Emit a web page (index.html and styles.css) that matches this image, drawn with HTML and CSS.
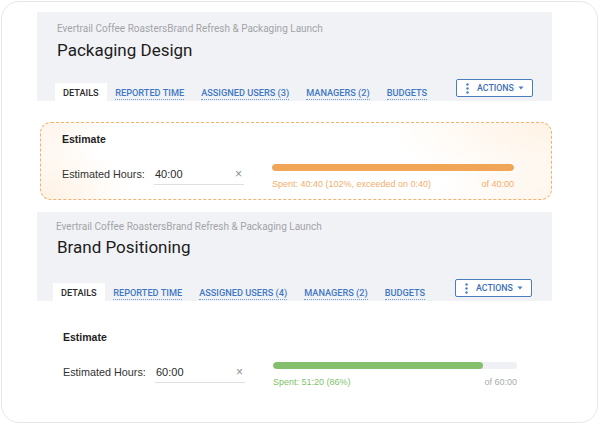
FILE: index.html
```html
<!DOCTYPE html>
<html lang="en">
<head>
<meta charset="utf-8">
<title>Tasks</title>
<link rel="stylesheet" href="styles.css">
</head>
<body>
<div class="card">

  <section class="panel">
    <div class="crumb">Evertrail Coffee RoastersBrand Refresh &amp; Packaging Launch</div>
    <h1 class="title">Packaging Design</h1>
    <div class="tabs">
      <span class="tab active">DETAILS</span>
      <span class="tab"><span class="tab-link">REPORTED TIME</span></span>
      <span class="tab"><span class="tab-link">ASSIGNED USERS (3)</span></span>
      <span class="tab"><span class="tab-link">MANAGERS (2)</span></span>
      <span class="tab"><span class="tab-link">BUDGETS</span></span>
      <button class="actions" type="button">
        <svg class="dots" width="3" height="11" viewBox="0 0 3 11"><circle cx="1.5" cy="1.5" r="1.2"/><circle cx="1.5" cy="5.5" r="1.2"/><circle cx="1.5" cy="9.5" r="1.2"/></svg>
        <span>ACTIONS</span>
        <svg class="caret" width="6" height="4" viewBox="0 0 6 4"><path d="M0.5 0.5h5L3 3.5z"/></svg>
      </button>
    </div>
  </section>

  <section class="estimate over">
    <div class="est-head">Estimate</div>
    <div class="est-row">
      <label class="est-label">Estimated Hours:</label>
      <div class="est-input"><span>40:00</span><span class="clear">×</span></div>
      <div class="est-progress">
        <div class="track"><div class="fill" style="width:100%"></div></div>
        <div class="est-meta"><span>Spent: 40:40 (102%, exceeded on 0:40)</span><span>of 40:00</span></div>
      </div>
    </div>
  </section>

  <section class="panel second">
    <div class="crumb">Evertrail Coffee RoastersBrand Refresh &amp; Packaging Launch</div>
    <h1 class="title">Brand Positioning</h1>
    <div class="tabs">
      <span class="tab active">DETAILS</span>
      <span class="tab"><span class="tab-link">REPORTED TIME</span></span>
      <span class="tab"><span class="tab-link">ASSIGNED USERS (4)</span></span>
      <span class="tab"><span class="tab-link">MANAGERS (2)</span></span>
      <span class="tab"><span class="tab-link">BUDGETS</span></span>
      <button class="actions" type="button">
        <svg class="dots" width="3" height="11" viewBox="0 0 3 11"><circle cx="1.5" cy="1.5" r="1.2"/><circle cx="1.5" cy="5.5" r="1.2"/><circle cx="1.5" cy="9.5" r="1.2"/></svg>
        <span>ACTIONS</span>
        <svg class="caret" width="6" height="4" viewBox="0 0 6 4"><path d="M0.5 0.5h5L3 3.5z"/></svg>
      </button>
    </div>
  </section>

  <section class="estimate ok">
    <div class="est-head">Estimate</div>
    <div class="est-row">
      <label class="est-label">Estimated Hours:</label>
      <div class="est-input"><span>60:00</span><span class="clear">×</span></div>
      <div class="est-progress">
        <div class="track"><div class="fill" style="width:86%"></div></div>
        <div class="est-meta"><span>Spent: 51:20 (86%)</span><span class="of">of 60:00</span></div>
      </div>
    </div>
  </section>

</div>
</body>
</html>
```

FILE: styles.css
```css
* { box-sizing: border-box; }

html, body {
  margin: 0;
  background: #ffffff;
}

body {
  font-family: Roboto, "Liberation Sans", Arial, sans-serif;
  color: #222;
}

.card {
  margin: 1px 0 0 1px;
  width: 597px;
  height: 422px;
  border: 1px solid #e5e7eb;
  border-radius: 18px;
  padding: 10px 0 0 35px;
  background: #fff;
  overflow: hidden;
}

/* task header */
.panel {
  width: 515px;
  height: 89px;
  background: #f1f2f5;
  padding: 10px 19px 0 18px;
  display: flex;
  flex-direction: column;
}

.panel.second {
  padding-top: 8px;
  padding-left: 16px;
  padding-right: 20px;
}

.crumb {
  font-size: 10px;
  line-height: 13px;
  color: #a2a4a8;
  margin-left: 2px;
  white-space: nowrap;
}

.second .crumb { margin-left: 3px; }

.title {
  margin: 5px 0 0 2px;
  font-size: 17px;
  line-height: 20px;
  font-weight: 400;
  color: #1c1c1c;
}

.second .title { margin-top: 4px; margin-left: 4px; }

.tabs {
  margin-top: auto;
  display: flex;
  align-items: flex-end;
}

.tab {
  height: 18px;
  padding: 0 8.5px;
  font-size: 9.2px;
  font-weight: 500;
  line-height: 19px;
  color: #3f78c4;
  white-space: nowrap;
}

.tab.active {
  background: #fff;
  color: #2b2b2b;
  padding: 0 8px;
}

.tab-link {
  border-bottom: 1px dotted #6f9bd8;
  padding-bottom: 1px;
}

.actions {
  margin: 0 0 4px auto;
  width: 77px;
  height: 18px;
  border: 1px solid #4a7cc2;
  border-radius: 2px;
  background: #fff;
  color: #3d6fb6;
  font-family: inherit;
  font-size: 8.8px;
  font-weight: 500;
  display: flex;
  align-items: center;
  padding: 0 0 0 9px;
  cursor: pointer;
}

.actions .dots { fill: #4a7cc2; margin-right: 8px; }
.actions .caret { fill: #4a7cc2; margin-left: auto; margin-right: 8px; }

/* estimate block */
.estimate {
  width: 512px;
  height: 78px;
  margin: 21px 0 12px 3px;
  border: 1px dashed transparent;
  border-radius: 11px;
  padding: 9px 37px 0 21px;
  font-family: "Liberation Sans", Arial, sans-serif;
}

.estimate.over {
  border-color: #f0b26e;
  background:
    radial-gradient(ellipse 90px 60px at 0% 100%, #fff1e2 0%, rgba(255,241,226,0) 100%),
    radial-gradient(ellipse 160px 70px at 100% 0%, #fff2e4 0%, rgba(255,242,228,0) 100%),
    radial-gradient(ellipse 120px 50px at 100% 100%, #fff5ec 0%, rgba(255,245,236,0) 100%),
    radial-gradient(ellipse 70px 50px at 0% 0%, #fff4ea 0%, rgba(255,244,234,0) 100%),
    #fff;
}

.estimate.ok {
  margin-top: 19px;
  margin-left: 4px;
  padding-right: 35px;
}

.est-head {
  font-size: 10.5px;
  font-weight: 700;
  line-height: 14px;
  color: #1e1e1e;
}

.est-row {
  margin-top: 18px;
  display: flex;
  align-items: flex-start;
}

.est-label {
  width: 92px;
  font-size: 10.8px;
  line-height: 20px;
  color: #333;
}

.est-input {
  width: 90px;
  height: 21px;
  border-bottom: 1px solid #dcdfe4;
  display: flex;
  justify-content: space-between;
  padding: 0 2px 0 1px;
  font-size: 11px;
  line-height: 20px;
  color: #2a2a2a;
}

.est-input .clear {
  color: #8a8d92;
  font-size: 12px;
}

.est-progress {
  margin-left: 28px;
  flex: 1;
}

.track {
  height: 7px;
  border-radius: 4px;
  background: #eef0f3;
  overflow: hidden;
}

.fill { height: 100%; border-radius: 4px; }

.over .fill { background: #f0a557; }
.ok .fill { background: #84bf6c; }

.est-meta {
  margin-top: 8px;
  display: flex;
  justify-content: space-between;
  font-size: 9px;
  line-height: 11px;
}

.over .est-meta { color: #f2ae6e; }
.ok .est-meta { color: #7fbf68; }
.ok .est-meta .of { color: #a9abae; }
```
